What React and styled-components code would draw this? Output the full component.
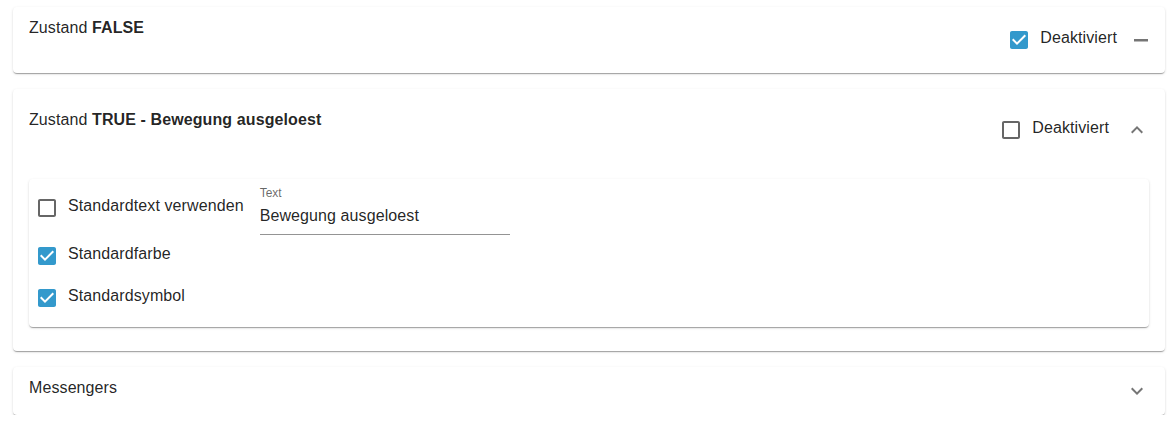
import React from "react";
import styled, { createGlobalStyle } from "styled-components";

const Global = createGlobalStyle`
  html, body { margin: 0; padding: 0; background: #fff; }
  body { font-family: "Liberation Sans", Arial, sans-serif; color: rgba(0,0,0,0.87); }
  * { box-sizing: border-box; }
`;

const Page = styled.div`
  padding: 7px 2px 0 13px;
  display: flex;
  flex-direction: column;
  gap: 16px;
`;

const Panel = styled.section`
  background: #fff;
  border-radius: 4px;
  box-shadow: 0px 2px 1px -1px rgba(0,0,0,0.2), 0px 1px 1px 0px rgba(0,0,0,0.14), 0px 1px 3px 0px rgba(0,0,0,0.12);
`;

const Summary = styled.div`
  display: flex;
  align-items: center;
  min-height: ${(p) => p.$h}px;
  padding: 0 ${(p) => p.$pr}px 0 16px;
`;

const Title = styled.div`
  flex: 1;
  align-self: flex-start;
  margin-top: ${(p) => p.$mt}px;
  font-size: 16px;
  line-height: 24px;
  letter-spacing: 0.1px;
  color: rgba(0,0,0,0.87);
  b { font-weight: 700; }
`;

const Right = styled.div`
  display: flex;
  align-items: center;
  gap: ${(p) => p.$gap}px;
`;

const CheckLabel = styled.label`
  display: inline-flex;
  align-items: center;
  margin-left: -11px;
  margin-top: ${(p) => p.$mt || 0}px;
  margin-right: ${(p) => p.$mr || 0}px;
  cursor: pointer;
`;

const CheckButton = styled.span`
  width: 42px;
  height: 42px;
  padding: 9px;
  display: inline-flex;
  flex-shrink: 0;
  svg { display: block; width: 24px; height: 24px; }
`;

const LabelText = styled.span`
  font-size: 16px;
  line-height: 24px;
  letter-spacing: 0.1px;
  padding-bottom: 4px;
  color: rgba(0,0,0,0.87);
  white-space: nowrap;
`;

const IconBox = styled.span`
  width: 24px;
  height: 24px;
  display: inline-flex;
  color: rgba(0,0,0,0.54);
  svg { display: block; width: 24px; height: 24px; fill: currentColor; }
`;

const Details = styled.div`
  padding: 8px 16px 24px 16px;
`;

const Card = styled.div`
  background: #fff;
  border-radius: 4px;
  box-shadow: 0px 2px 1px -1px rgba(0,0,0,0.2), 0px 1px 1px 0px rgba(0,0,0,0.14), 0px 1px 3px 0px rgba(0,0,0,0.12);
  padding: 6px 8px 8px 8px;
  display: flex;
  flex-direction: column;
`;

const Row = styled.div`
  display: flex;
  align-items: ${(p) => p.$align || "center"};
`;

const Field = styled.div`
  display: flex;
  flex-direction: column;
  width: 250px;
`;

const FieldLabel = styled.div`
  font-size: 12px;
  line-height: 16px;
  color: rgba(0,0,0,0.6);
`;

const Input = styled.input`
  font-family: "Liberation Sans", Arial, sans-serif;
  font-size: 16px;
  letter-spacing: 0.1px;
  line-height: 23px;
  height: 34px;
  padding: 3px 0 7px;
  border: 0;
  border-bottom: 1px solid rgba(0,0,0,0.42);
  outline: none;
  color: rgba(0,0,0,0.87);
  background: transparent;
  width: 100%;
`;

const BLUE = "#3399CC";

function Check({ checked }) {
  return (
    <CheckButton>
      {checked ? (
        <svg viewBox="0 0 24 24">
          <rect x="4" y="4" width="16" height="16" fill="#fff" />
          <path fill={BLUE} d="M19 3H5c-1.11 0-2 .9-2 2v14c0 1.1.89 2 2 2h14c1.1 0 2-.9 2-2V5c0-1.1-.9-2-2-2zm-9 14l-5-5 1.41-1.41L10 14.17l7.59-7.59L19 8l-7 7z" />
        </svg>
      ) : (
        <svg viewBox="0 0 24 24">
          <path fill="rgba(0,0,0,0.6)" d="M19 5v14H5V5h14m0-2H5c-1.11 0-2 .9-2 2v14c0 1.1.89 2 2 2h14c1.1 0 2-.9 2-2V5c0-1.1-.9-2-2-2z" />
        </svg>
      )}
    </CheckButton>
  );
}

function CheckField({ checked, label, mr, mt }) {
  return (
    <CheckLabel $mr={mr} $mt={mt}>
      <Check checked={checked} />
      <LabelText>{label}</LabelText>
    </CheckLabel>
  );
}

const Minus = () => (
  <IconBox>
    <svg viewBox="0 0 24 24"><path d="M19 13.5H5v-2.5h14v2.5z" /></svg>
  </IconBox>
);
const Less = () => (
  <IconBox>
    <svg viewBox="0 0 24 24"><path d="M12 8l-6 6 1.41 1.41L12 10.83l4.59 4.58L18 14z" /></svg>
  </IconBox>
);
const More = () => (
  <IconBox>
    <svg viewBox="0 0 24 24"><path d="M16.59 8.59 12 13.17 7.41 8.59 6 10l6 6 6-6z" /></svg>
  </IconBox>
);

export default function App() {
  return (
    <>
      <Global />
      <Page>
        <Panel>
          <Summary $h={66} $pr={12}>
            <Title $mt={9}>Zustand <b>FALSE</b></Title>
            <Right $gap={12}>
              <CheckField checked label="Deaktiviert" />
              <Minus />
            </Right>
          </Summary>
        </Panel>

        <Panel>
          <Summary $h={82} $pr={16}>
            <Title $mt={19}>Zustand <b>TRUE - Bewegung ausgeloest</b></Title>
            <Right $gap={16}>
              <CheckField label="Deaktiviert" />
              <Less />
            </Right>
          </Summary>
          <Details>
            <Card>
              <Row $align="flex-start">
                <CheckField label="Standardtext verwenden" mr={16} mt={2} />
                <Field>
                  <FieldLabel>Text</FieldLabel>
                  <Input defaultValue="Bewegung ausgeloest" />
                </Field>
              </Row>
              <Row>
                <CheckField checked label="Standardfarbe" />
              </Row>
              <Row>
                <CheckField checked label="Standardsymbol" />
              </Row>
            </Card>
          </Details>
        </Panel>

        <Panel>
          <Summary $h={48} $pr={16}>
            <Title $mt={9}>Messengers</Title>
            <Right $gap={16}>
              <More />
            </Right>
          </Summary>
        </Panel>
      </Page>
    </>
  );
}
